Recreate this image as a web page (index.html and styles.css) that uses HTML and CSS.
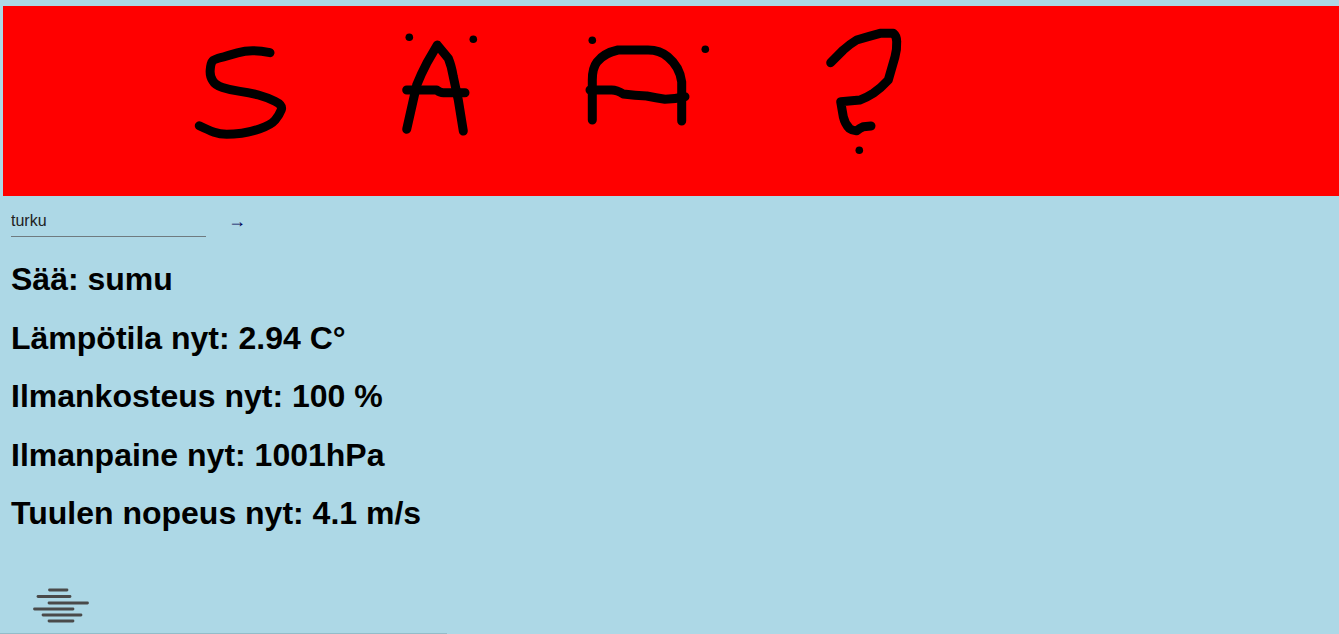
FILE: index.html
```html
<!DOCTYPE html>
<html lang="fi">
<head>
<meta charset="utf-8">
<title>Sää?</title>
<link rel="stylesheet" href="styles.css">
</head>
<body>
<header class="banner">
<svg class="banner-art" viewBox="3 6 1336 190" width="1336" height="190" role="img" aria-label="SÄÄ?">
<g class="ink">
<path d="M270,52.7 Q260,50.7 252.5,50.7 Q245,50.7 237.5,52.9 Q230,55 222.5,57.2 Q214,59.3 212.4,61.3 Q210.7,63.3 210.2,70 Q209.7,76.7 212.9,80.9 Q215,85 222.5,87.5 Q230,90 240,91.4 Q250,92.7 258.4,95 Q266.7,97.3 274.9,101.2 Q283,105 281.2,110 Q279.3,115 275.2,120 Q271,125 260,128.7 Q250,132.3 241.7,133.3 Q233.3,134.3 226.7,134.3 Q220,134.3 214.2,132.2 Q208.3,130 199.3,125.7"/>
<path d="M406.7,129.3 L416.7,85 Q421,74 426.7,63.3 L437.3,45 L448.3,58.3 Q451.5,66 453.3,76.7 L458.3,100 L463.3,131"/>
<path d="M406.7,90 L436.7,90 Q440,92.7 443.3,92.7 L465,92.7"/>
<path d="M592.3,120 L592.3,80 Q592.3,68 597,62 Q604,53 618,50 L648,50 Q660,50 668,57 Q680,67 681.7,82 L681.7,121"/>
<path d="M590,90 L611.7,90 Q617,90 623.3,94 Q635,95.5 646.7,96 Q656,98 665,99.3 Q675,99.3 685,96.7"/>
<path d="M830.7,62.7 L843.3,50 Q850,44 856.7,40 Q868,36.5 880,33.3 L893.3,33.3 Q896.7,36 896.7,41.7 Q897,50 895,56.7 L888.3,80 Q881,88 873.3,93.3 Q866,98 860,100 L840.7,101.7 L843.3,116.7 Q845,124 849.3,128.3 Q853,131 856.7,130.7 Q860,128 863.3,126.7 L871,126"/>
</g>
<g class="dots">
<circle cx="409.3" cy="37.3" r="3.8"/>
<circle cx="473.3" cy="39.3" r="3.8"/>
<circle cx="592.3" cy="40.3" r="3.8"/>
<circle cx="705.3" cy="49.3" r="3.8"/>
<circle cx="859.3" cy="150.3" r="3.8"/>
</g>
</svg>
</header>
<form class="search">
<input class="search-input" type="text" value="turku">
<button class="search-go" type="button">→</button>
</form>
<main class="weather">
<h1 class="reading">Sää: sumu</h1>
<h1 class="reading">Lämpötila nyt: 2.94 C°</h1>
<h1 class="reading">Ilmankosteus nyt: 100 %</h1>
<h1 class="reading">Ilmanpaine nyt: 1001hPa</h1>
<h1 class="reading">Tuulen nopeus nyt: 4.1 m/s</h1>
</main>
<svg class="fog-icon" viewBox="0 0 100 50" width="100" height="50" role="img" aria-label="sumu">
<g class="fog-lines">
<line x1="49.5" y1="8" x2="67" y2="8"/>
<line x1="38" y1="14.5" x2="70" y2="14.5"/>
<line x1="49" y1="21" x2="87.5" y2="21"/>
<line x1="34.5" y1="27" x2="73" y2="27"/>
<line x1="43" y1="33" x2="81" y2="33"/>
<line x1="49" y1="39" x2="73" y2="39"/>
</g>
</svg>
<div class="bottom-rule"></div>
</body>
</html>
```
FILE: styles.css
```css
html, body {
  margin: 0;
  padding: 0;
  height: 634px;
  overflow: hidden;
}
body {
  background: #add8e6;
  color: #000;
  font-family: "Liberation Sans", Arial, sans-serif;
  display: flex;
  flex-direction: column;
}
.banner {
  margin: 6px 0 0 3px;
  height: 190px;
  background: #f00;
}
.banner-art {
  display: block;
}
.ink path {
  fill: none;
  stroke: #000;
  stroke-width: 9;
  stroke-linecap: round;
  stroke-linejoin: round;
}
.dots circle {
  fill: #000;
}
.search {
  display: flex;
  align-items: flex-start;
  margin: 15px 0 0 11px;
  height: 29px;
}
.search-input {
  width: 195px;
  height: 26px;
  box-sizing: border-box;
  padding: 0 0 6px;
  border: 0;
  border-bottom: 1px solid #6f7b80;
  background: transparent;
  color: #222;
  font: 16px "Liberation Sans", Arial, sans-serif;
  outline: none;
}
.search-go {
  margin: 0 0 0 22px;
  padding: 0;
  border: 0;
  background: transparent;
  color: #000055;
  font: 18px/20px "Liberation Sans", Arial, sans-serif;
}
.weather {
  margin: 0 0 0 11px;
}
.reading {
  margin: 21.44px 0;
  font-size: 32px;
  font-weight: 700;
  line-height: 37px;
}
.fog-icon {
  display: block;
  margin-top: 28.2px;
  flex: none;
}
.fog-lines line {
  stroke: #4a4a4a;
  stroke-width: 2.8;
  stroke-linecap: round;
}
.bottom-rule {
  position: absolute;
  left: 0;
  top: 633px;
  width: 447px;
  height: 1px;
  background: #93bcc9;
}
```
